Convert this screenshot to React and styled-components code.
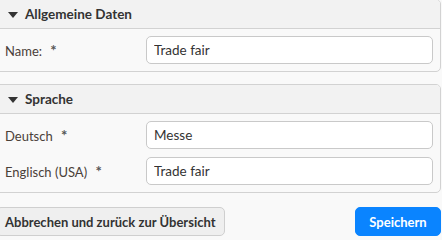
import styled, { createGlobalStyle } from 'styled-components';

const GlobalStyle = createGlobalStyle`
	html, body {
		margin: 0;
		padding: 0;
		background: #f9f9f9;
		font-family: Lato, "Noto Sans", sans-serif;
		font-size: 13px;
		color: #333;
	}
`;

const App = () => {
	return (
		<>
			<GlobalStyle />
			<Page>
				<Panel>
					<PanelHeader>
						<Caret />
						Allgemeine Daten
					</PanelHeader>
					<PanelBody>
						<Row>
							<Label>
								Name: <Star>*</Star>
							</Label>
							<Input defaultValue="Trade fair" />
						</Row>
					</PanelBody>
				</Panel>
				<Panel>
					<PanelHeader>
						<Caret />
						Sprache
					</PanelHeader>
					<PanelBody>
						<Row>
							<Label>
								Deutsch <Star>*</Star>
							</Label>
							<Input defaultValue="Messe" />
						</Row>
						<Row>
							<Label>
								Englisch (USA) <Star>*</Star>
							</Label>
							<Input defaultValue="Trade fair" />
						</Row>
					</PanelBody>
				</Panel>
				<Actions>
					<Button>Abbrechen und zurück zur Übersicht</Button>
					<Button primary>Speichern</Button>
				</Actions>
			</Page>
		</>
	);
};

export default App;

/* Styles --- */

const Page = styled.div`
	display: flex;
	flex-direction: column;
	gap: 12px;
	width: 447px;
	margin-left: -6px;
	margin-top: -1px;
`;

const Panel = styled.section`
	border: 1px solid #d2d2d2;
	border-radius: 5px;
	background: #f9f9f9;
	overflow: hidden;
`;

const PanelHeader = styled.div`
	display: flex;
	align-items: center;
	gap: 7px;
	height: 28px;
	padding: 0 13px;
	background: #f2f2f2;
	border-bottom: 1px solid #d2d2d2;
	font-size: 13.5px;
	font-weight: 700;
	color: #333;
`;

const Caret = styled.span`
	width: 0;
	height: 0;
	margin-top: 1px;
	border-left: 5px solid transparent;
	border-right: 5px solid transparent;
	border-top: 6px solid #333;
`;

const PanelBody = styled.div`
	display: flex;
	flex-direction: column;
	gap: 8px;
	padding: 7px 7px 7px 10px;
`;

const Row = styled.div`
	display: flex;
	align-items: center;
`;

const Label = styled.label`
	width: 141px;
	color: #4a4038;
	white-space: pre;
`;

const Star = styled.span`
	margin-left: 5px;
	font-size: 15px;
	font-weight: 700;
	color: #555;
`;

const Input = styled.input`
	flex: 1;
	height: 28px;
	box-sizing: border-box;
	padding: 0 7px;
	border: 1px solid #c9c9c9;
	border-radius: 5px;
	background: #fff;
	font-family: inherit;
	font-size: 13.5px;
	color: #333;
	outline: none;
`;

const Actions = styled.div`
	display: flex;
	justify-content: space-between;
	align-items: center;
	padding: 2px 0 0 2px;
`;

const Button = styled.button`
	height: 29px;
	border: 1px solid ${(p) => (p.primary ? '#0a84ff' : '#cfcfcf')};
	border-radius: 5px;
	background: ${(p) => (p.primary ? '#0a84ff' : '#efefef')};
	color: ${(p) => (p.primary ? '#fff' : '#333')};
	font-family: inherit;
	font-size: 13px;
	font-weight: 700;
	padding: 0 8px;
	width: ${(p) => (p.primary ? '86px' : 'auto')};
`;
